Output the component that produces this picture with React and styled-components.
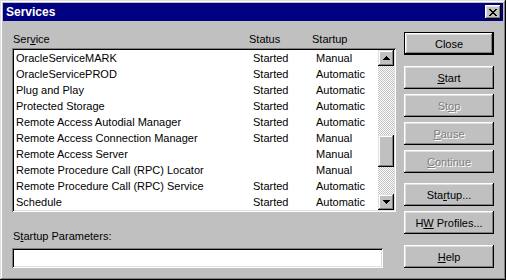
import React from "react";
import styled, { createGlobalStyle } from "styled-components";

const GlobalStyle = createGlobalStyle`
  html, body {
    margin: 0;
    padding: 0;
    background: #c0c0c0;
  }
  * {
    box-sizing: border-box;
  }
`;

const Window = styled.div`
  width: 506px;
  height: 280px;
  padding: 3px;
  background: #c0c0c0;
  font-family: "Liberation Sans", Arial, sans-serif;
  font-size: 11px;
  color: #000;
  box-shadow: inset -1px -1px #000, inset 1px 1px #dfdfdf,
    inset -2px -2px #808080, inset 2px 2px #fff;
  display: flex;
  flex-direction: column;
`;

const TitleBar = styled.div`
  height: 18px;
  background: #000080;
  display: flex;
  align-items: center;
  justify-content: space-between;
  padding: 0 2px 0 3px;
`;

const Title = styled.span`
  color: #fff;
  font-weight: bold;
  font-size: 12px;
`;

const TitleButton = styled.div`
  width: 16px;
  height: 14px;
  background: #c0c0c0;
  display: flex;
  align-items: center;
  justify-content: center;
  box-shadow: inset -1px -1px #000, inset 1px 1px #fff,
    inset -2px -2px #808080, inset 2px 2px #dfdfdf;
`;

const Body = styled.div`
  flex: 1;
  display: flex;
  gap: 8px;
  padding: 11px 9px 0 9px;
`;

const LeftColumn = styled.div`
  width: 384px;
  display: flex;
  flex-direction: column;
`;

const Header = styled.div`
  height: 16px;
  display: grid;
  grid-template-columns: 236px 63px 1fr;
  padding-left: 1px;
  line-height: 13px;
  padding-top: 1px;
`;

const ListBox = styled.div`
  height: 164px;
  padding: 2px;
  background: #fff;
  display: flex;
  box-shadow: inset 1px 1px #808080, inset -1px -1px #fff,
    inset 2px 2px #000, inset -2px -2px #dfdfdf;
`;

const Rows = styled.div`
  flex: 1;
`;

const Row = styled.div`
  height: 16px;
  line-height: 16px;
  display: grid;
  grid-template-columns: 237px 63px 1fr;
  padding-left: 2px;
  white-space: nowrap;
`;

const ScrollBar = styled.div`
  width: 16px;
  display: flex;
  flex-direction: column;
`;

const ArrowButton = styled.div`
  width: 16px;
  height: 16px;
  background: #c0c0c0;
  display: flex;
  align-items: center;
  justify-content: center;
  box-shadow: inset -1px -1px #000, inset 1px 1px #dfdfdf,
    inset -2px -2px #808080, inset 2px 2px #fff;
`;

const Track = styled.div`
  flex: 1;
  background-color: #c0c0c0;
  background-image: conic-gradient(
    #fff 25%,
    #c0c0c0 0 50%,
    #fff 0 75%,
    #c0c0c0 0
  );
  background-size: 2px 2px;
`;

const Thumb = styled.div`
  margin-top: ${(p) => p.offset}px;
  height: 32px;
  background: #c0c0c0;
  box-shadow: inset -1px -1px #000, inset 1px 1px #dfdfdf,
    inset -2px -2px #808080, inset 2px 2px #fff;
`;

const Label = styled.div`
  margin-top: 18px;
  padding-left: 1px;
  line-height: 13px;
`;

const TextField = styled.div`
  margin-top: 5px;
  width: 371px;
  height: 20px;
  background: #fff;
  box-shadow: inset 1px 1px #808080, inset -1px -1px #fff,
    inset 2px 2px #000, inset -2px -2px #dfdfdf;
`;

const RightColumn = styled.div`
  width: 90px;
  display: flex;
  flex-direction: column;
`;

const Button = styled.div`
  margin-top: ${(p) => p.gap || 0}px;
  height: 23px;
  display: flex;
  align-items: center;
  justify-content: center;
  background: #c0c0c0;
  color: ${(p) => (p.disabled ? "#808080" : "#000")};
  text-shadow: ${(p) => (p.disabled ? "1px 1px #fff" : "none")};
  box-shadow: ${(p) =>
    p.isDefault
      ? "inset 0 0 0 1px #000, inset -2px -2px #000, inset 2px 2px #fff, inset -3px -3px #808080, inset 3px 3px #dfdfdf"
      : "inset -1px -1px #000, inset 1px 1px #fff, inset -2px -2px #808080, inset 2px 2px #dfdfdf"};
  u {
    text-decoration-thickness: 1px;
    text-underline-offset: 1px;
  }
`;

const services = [
  ["OracleServiceMARK", "Started", "Manual"],
  ["OracleServicePROD", "Started", "Automatic"],
  ["Plug and Play", "Started", "Automatic"],
  ["Protected Storage", "Started", "Automatic"],
  ["Remote Access Autodial Manager", "Started", "Automatic"],
  ["Remote Access Connection Manager", "Started", "Manual"],
  ["Remote Access Server", "", "Manual"],
  ["Remote Procedure Call (RPC) Locator", "", "Manual"],
  ["Remote Procedure Call (RPC) Service", "Started", "Automatic"],
  ["Schedule", "Started", "Automatic"],
];

const CloseGlyph = () => (
  <svg width="8" height="7" viewBox="0 0 8 7" shapeRendering="crispEdges">
    <path
      d="M0 0h2v1h-2zM6 0h2v1h-2zM1 1h2v1h-2zM5 1h2v1h-2zM2 2h4v1h-4zM3 3h2v1h-2zM2 4h4v1h-4zM1 5h2v1h-2zM5 5h2v1h-2zM0 6h2v1h-2zM6 6h2v1h-2z"
      fill="#000"
    />
  </svg>
);

const Arrow = ({ down }) => (
  <svg width="7" height="4" viewBox="0 0 7 4" shapeRendering="crispEdges">
    <path
      d={
        down
          ? "M0 0h7v1h-7zM1 1h5v1h-5zM2 2h3v1h-3zM3 3h1v1h-1z"
          : "M3 0h1v1h-1zM2 1h3v1h-3zM1 2h5v1h-5zM0 3h7v1h-7z"
      }
      fill="#000"
    />
  </svg>
);

const App = () => {
  return (
    <>
      <GlobalStyle />
      <Window>
        <TitleBar>
          <Title>Services</Title>
          <TitleButton>
            <CloseGlyph />
          </TitleButton>
        </TitleBar>
        <Body>
          <LeftColumn>
            <Header>
              <span>
                Ser<u>v</u>ice
              </span>
              <span>Status</span>
              <span>Startup</span>
            </Header>
            <ListBox>
              <Rows>
                {services.map(([name, status, startup]) => (
                  <Row key={name}>
                    <span>{name}</span>
                    <span>{status}</span>
                    <span>{startup}</span>
                  </Row>
                ))}
              </Rows>
              <ScrollBar>
                <ArrowButton>
                  <Arrow />
                </ArrowButton>
                <Track>
                  <Thumb offset={69} />
                </Track>
                <ArrowButton>
                  <Arrow down />
                </ArrowButton>
              </ScrollBar>
            </ListBox>
            <Label>
              S<u>t</u>artup Parameters:
            </Label>
            <TextField />
          </LeftColumn>
          <RightColumn>
            <Button isDefault>Close</Button>
            <Button gap={11}>
              <span>
                <u>S</u>tart
              </span>
            </Button>
            <Button gap={5} disabled>
              <span>
                St<u>o</u>p
              </span>
            </Button>
            <Button gap={5} disabled>
              <span>
                <u>P</u>ause
              </span>
            </Button>
            <Button gap={5} disabled>
              <span>
                <u>C</u>ontinue
              </span>
            </Button>
            <Button gap={10}>
              <span>
                Sta<u>r</u>tup...
              </span>
            </Button>
            <Button gap={5}>
              <span>
                H<u>W</u> Profiles...
              </span>
            </Button>
            <Button gap={11}>
              <span>
                <u>H</u>elp
              </span>
            </Button>
          </RightColumn>
        </Body>
      </Window>
    </>
  );
};

export default App;
